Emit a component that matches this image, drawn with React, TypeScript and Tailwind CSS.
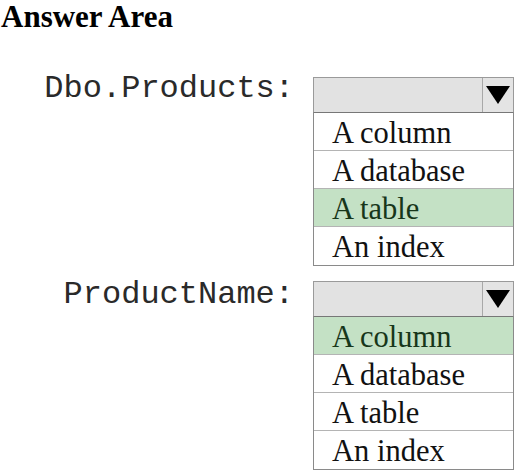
const options = ["A column", "A database", "A table", "An index"];

const Arrow = () => (
  <svg width="24" height="18" viewBox="0 0 24 18">
    <polygon points="0,0 24,0 12,18" fill="#000" />
  </svg>
);

const DropDown = ({ selected }: { selected: string }) => {
  return (
    <div className="w-[201px] shrink-0">
      <div className="flex h-[36px] border border-[#9a9a9a] border-b-[#777] bg-[#e2e2e2]">
        <div className="flex-1" />
        <div className="flex w-[31px] items-center justify-center border-l border-[#a8a8a8] bg-[#e4e4e4]">
          <Arrow />
        </div>
      </div>
      <div className="flex flex-col divide-y divide-[#b4b4b4] border-x border-b border-[#8a8a8a]">
        {options.map((opt) => (
          <div
            key={opt}
            className={
              opt === selected
                ? "h-[38px] bg-[#c4e1c5] pl-[18px] pt-[4px] text-[30.5px] leading-[33px] text-[#17361a]"
                : "h-[38px] bg-white pl-[18px] pt-[4px] text-[30.5px] leading-[33px] text-[#111]"
            }
          >
            {opt}
          </div>
        ))}
      </div>
    </div>
  );
};

export default function App() {
  return (
    <div className="h-[471px] w-[515px] overflow-hidden bg-white font-['Liberation_Serif','Times_New_Roman',serif] text-[#111]">
      <h1 className="pl-[1px] text-[31px] font-bold leading-[34px] text-black">
        Answer Area
      </h1>

      <div className="mt-[43px] flex items-start">
        <div className="-mt-[6px] w-[294px] shrink-0 text-right font-['Liberation_Mono','Courier_New',monospace] text-[32px] leading-[36px] text-[#2a2a2a]">
          Dbo.Products:
        </div>
        <div className="ml-[19px]">
          <DropDown selected="A table" />
        </div>
      </div>

      <div className="mt-[15px] flex items-start">
        <div className="-mt-[4px] w-[294px] shrink-0 text-right font-['Liberation_Mono','Courier_New',monospace] text-[32px] leading-[36px] text-[#2a2a2a]">
          ProductName:
        </div>
        <div className="ml-[19px]">
          <DropDown selected="A column" />
        </div>
      </div>
    </div>
  );
}
